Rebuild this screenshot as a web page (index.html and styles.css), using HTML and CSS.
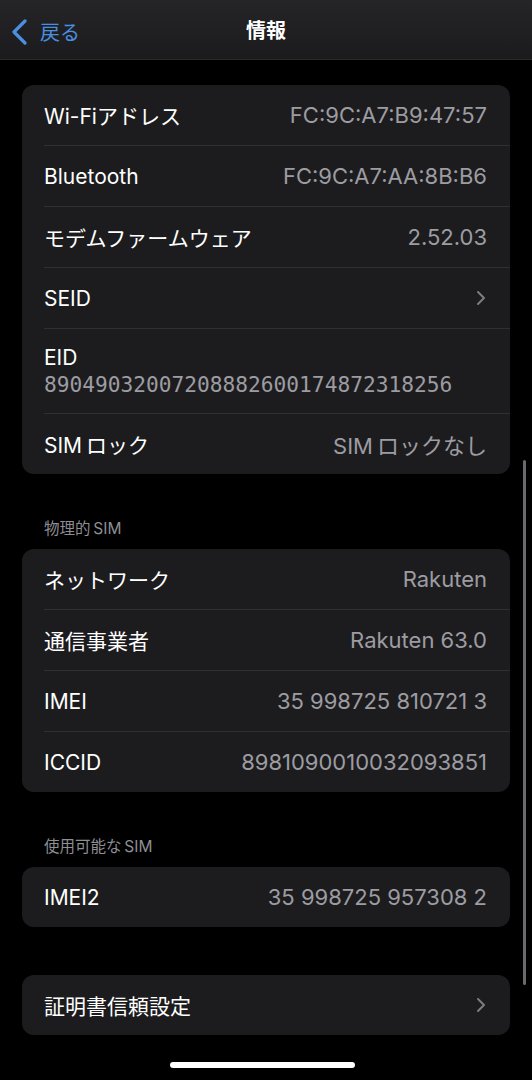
FILE: index.html
```html
<!DOCTYPE html>
<html lang="ja">
<head>
  <meta charset="UTF-8">
  <title>情報</title>
  <link rel="stylesheet" href="styles.css">
</head>
<body>
  <div class="screen">
    <header class="navbar">
      <a class="back">
        <svg width="18" height="26" viewBox="0 0 18 26"><path d="M14 2 L3 13 L14 24" fill="none" stroke="#4a8fe0" stroke-width="3.2" stroke-linecap="round" stroke-linejoin="round"/></svg>
        <span>戻る</span>
      </a>
      <h1>情報</h1>
    </header>

    <div class="content">
      <div class="card first">
        <div class="row"><span class="label">Wi-Fiアドレス</span><span class="value">FC:9C:A7:B9:47:57</span></div>
        <div class="row"><span class="label">Bluetooth</span><span class="value">FC:9C:A7:AA:8B:B6</span></div>
        <div class="row"><span class="label">モデムファームウェア</span><span class="value">2.52.03</span></div>
        <div class="row"><span class="label">SEID</span><svg class="chevron" width="10" height="16" viewBox="0 0 10 16"><path d="M2 2 L8 8 L2 14" fill="none" stroke="#7c7c81" stroke-width="2" stroke-linecap="round" stroke-linejoin="round"/></svg></div>
        <div class="row tall"><span class="label">EID</span><span class="value mono">89049032007208882600174872318256</span></div>
        <div class="row"><span class="label">SIM&thinsp;ロック</span><span class="value">SIM&thinsp;ロックなし</span></div>
      </div>

      <div class="section-title">物理的&thinsp;SIM</div>
      <div class="card">
        <div class="row"><span class="label">ネットワーク</span><span class="value">Rakuten</span></div>
        <div class="row"><span class="label">通信事業者</span><span class="value">Rakuten 63.0</span></div>
        <div class="row"><span class="label">IMEI</span><span class="value">35 998725 810721 3</span></div>
        <div class="row"><span class="label">ICCID</span><span class="value">8981090010032093851</span></div>
      </div>

      <div class="section-title">使用可能な&thinsp;SIM</div>
      <div class="card">
        <div class="row"><span class="label">IMEI2</span><span class="value">35 998725 957308 2</span></div>
      </div>

      <div class="card spaced">
        <div class="row"><span class="label">証明書信頼設定</span><svg class="chevron" width="10" height="16" viewBox="0 0 10 16"><path d="M2 2 L8 8 L2 14" fill="none" stroke="#7c7c81" stroke-width="2" stroke-linecap="round" stroke-linejoin="round"/></svg></div>
      </div>
    </div>

    <div class="scrollbar"></div>
    <div class="home-indicator"></div>
  </div>
</body>
</html>
```

FILE: styles.css
```css
body {
  margin: 0;
  background: #000;
  font-family: Inter, "Noto Sans CJK JP", sans-serif;
  color: #fff;
}
.screen {
  position: relative;
  width: 532px;
  height: 1080px;
  overflow: hidden;
  background: #000;
}
.navbar {
  height: 60px;
  background: linear-gradient(#252527, #1b1b1d);
  border-bottom: 1px solid #2a2a2c;
  box-sizing: border-box;
  display: flex;
  align-items: center;
  justify-content: center;
  position: relative;
}
.navbar h1 {
  margin: 0;
  font-size: 20px;
  font-weight: 700;
}
.back {
  position: absolute;
  left: 11px;
  top: 17px;
  display: flex;
  align-items: center;
  gap: 11px;
  color: #4a8fe0;
  font-size: 20px;
}
.content {
  padding-top: 25px;
}
.card {
  margin: 0 22px;
  background: #1c1c1e;
  border-radius: 12px;
  padding-left: 22px;
}
.card.spaced {
  margin-top: 48px;
}
.row {
  height: 60px;
  padding-right: 23px;
  display: flex;
  align-items: center;
  justify-content: space-between;
  border-top: 1px solid #2f2f31;
  font-size: 21px;
}
.row:first-child {
  border-top: none;
}
.row.tall {
  height: 84px;
  flex-direction: column;
  align-items: flex-start;
  justify-content: center;
  gap: 2px;
}
.label {
  color: #fff;
}
.value {
  color: #9c9ca2;
  font-size: 22px;
}
.mono {
  font-family: "DejaVu Sans Mono", monospace;
  font-size: 21.2px;
}
.chevron {
  margin-right: 1px;
}
.section-title {
  padding: 46px 0 11px 44px;
  font-size: 15.5px;
  line-height: 18px;
  color: #8e8e93;
}
.scrollbar {
  position: absolute;
  left: 523px;
  top: 460px;
  width: 3px;
  height: 525px;
  border-radius: 2px;
  background: #6a6a6e;
}
.home-indicator {
  position: absolute;
  left: 170px;
  top: 1062px;
  width: 185px;
  height: 6px;
  border-radius: 3px;
  background: #fff;
}
```
